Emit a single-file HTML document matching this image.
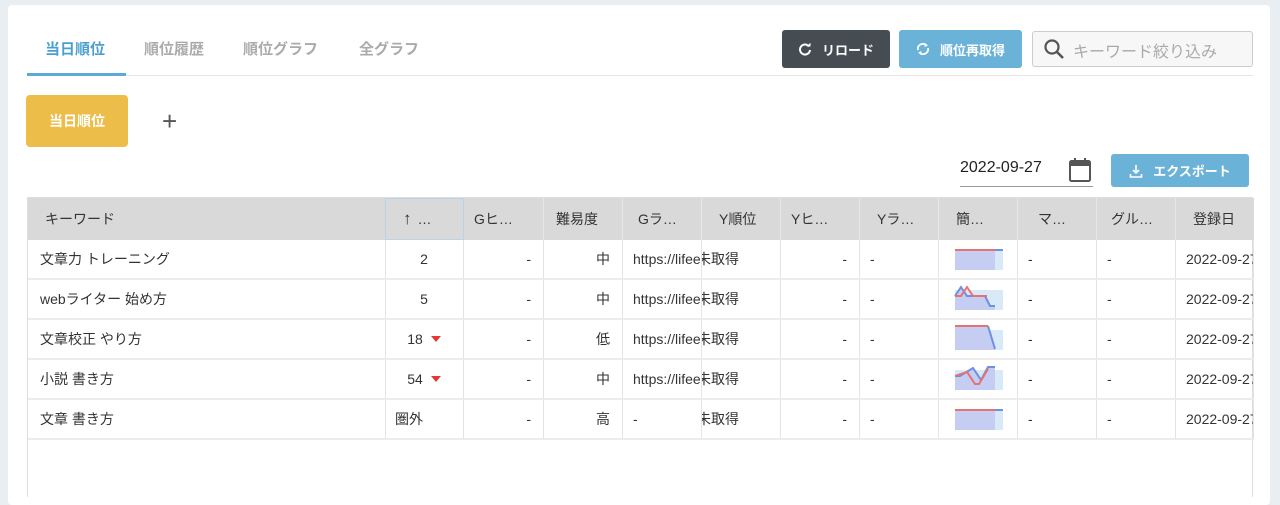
<!DOCTYPE html>
<html><head><meta charset="utf-8"><style>
*{box-sizing:border-box;margin:0;padding:0}
body{width:1280px;height:492px;background:#e9eef2;font-family:"Liberation Sans","Noto Sans CJK JP",sans-serif;position:relative;overflow:hidden;color:#333}
.card{position:absolute;left:8px;top:5px;width:1262px;height:500px;background:#fff;border-radius:4px}
.a{position:absolute}
.tab{position:absolute;top:38px;font-size:15px;font-weight:bold;color:#aaa}
.btn{position:absolute;border-radius:3px;color:#fff;font-size:13px;font-weight:bold;display:flex;align-items:center;justify-content:center;gap:10px}
.tbl{position:absolute;left:27px;top:197px;width:1226px;height:300px;border:1px solid #ddd;border-bottom:none}
.hd{position:absolute;top:0;height:42px;background:#d9d9d9;font-size:14px;display:flex;align-items:center;border-right:1px solid #e6e6e6}
.c{position:absolute;height:40px;font-size:14px;display:flex;align-items:center;border-right:1px solid #e4e4e4;border-bottom:2px solid #ececec;overflow:hidden;white-space:nowrap}
.r{justify-content:flex-end;padding-right:12px}
.ctr{justify-content:center}
.l{padding-left:10px}
.tri{display:inline-block;width:0;height:0;border-left:5px solid transparent;border-right:5px solid transparent;border-top:6px solid #e53935;margin-left:8px}
</style></head><body>
<div class="card"></div>
<div class="tab" style="left:45px;color:#4a9fd0">当日順位</div>
<div class="tab" style="left:144px">順位履歴</div>
<div class="tab" style="left:243px">順位グラフ</div>
<div class="tab" style="left:359px">全グラフ</div>
<div class="a" style="left:27px;top:75px;width:1226px;height:1px;background:#e5e5e5"></div>
<div class="a" style="left:27px;top:73px;width:99px;height:3px;background:#5aaad6"></div>
<div class="btn" style="left:782px;top:30px;width:108px;height:38px;background:#454d52">
<svg width="14" height="14" viewBox="0 0 14 14"><path d="M11 4.5A5 5 0 1 0 12 8" stroke="#fff" stroke-width="2" fill="none"/><path d="M8.5 4.5H12.5V0.8Z" fill="#fff"/></svg>リロード</div>
<div class="btn" style="left:899px;top:30px;width:123px;height:38px;background:#6ab2d8">
<svg width="14" height="14" viewBox="0 0 14 14"><path d="M2 8A5 5 0 0 1 10 3M12 6A5 5 0 0 1 4 11" stroke="#fff" stroke-width="1.8" fill="none"/><path d="M9 1L12 3.5 8.5 5Z M5 13L2 10.5 5.5 9Z" fill="#fff"/></svg>順位再取得</div>
<div class="a" style="left:1032px;top:31px;width:221px;height:36px;border:1px solid #ccc;border-radius:3px;background:#f7f7f7"></div>
<svg class="a" style="left:1043px;top:38px" width="22" height="22" viewBox="0 0 22 22"><circle cx="9" cy="9" r="6.5" stroke="#555" stroke-width="2.2" fill="none"/><path d="M14 14L20 20" stroke="#555" stroke-width="2.6"/></svg>
<div class="a" style="left:1073px;top:38px;font-size:16px;color:#aaa">キーワード絞り込み</div>
<div class="btn" style="left:26px;top:95px;width:102px;height:52px;background:#ecbd48;font-size:14px;border-radius:4px">当日順位</div>
<div class="a" style="left:162px;top:106px;font-size:26px;color:#555;font-weight:300">+</div>
<div class="a" style="left:960px;top:159px;font-size:16px;color:#222">2022-09-27</div>
<svg class="a" style="left:1068px;top:157px" width="24" height="26" viewBox="0 0 24 26"><rect x="2" y="4" width="20" height="20" rx="1.5" stroke="#555" stroke-width="2" fill="none"/><rect x="2" y="4" width="20" height="5" fill="#555"/><rect x="6" y="1" width="2" height="5" fill="#555"/><rect x="16" y="1" width="2" height="5" fill="#555"/></svg>
<div class="a" style="left:960px;top:186px;width:133px;height:1px;background:#999"></div>
<div class="btn" style="left:1111px;top:154px;width:138px;height:33px;background:#6ab2d8"><svg width="14" height="14" viewBox="0 0 14 14"><path d="M7 1V9M4 6L7 9 10 6M1.5 10V13H12.5V10" stroke="#fff" stroke-width="1.6" fill="none"/></svg>エクスポート</div>

<div class="tbl">
<div class="hd" style="left:0;width:358px;padding-left:17px">キーワード</div>
<div class="hd" style="left:357px;width:79px;padding-left:17px;border:1px solid #b8d4e8"><span style="font-size:17px;margin-right:6px">↑</span>…</div>
<div class="hd" style="left:436px;width:80px;padding-left:10px">Gヒ…</div>
<div class="hd" style="left:516px;width:79px;padding-left:12px">難易度</div>
<div class="hd" style="left:595px;width:79px;padding-left:15px">Gラ…</div>
<div class="hd" style="left:674px;width:79px;padding-left:17px">Y順位</div>
<div class="hd" style="left:753px;width:79px;padding-left:10px">Yヒ…</div>
<div class="hd" style="left:832px;width:79px;padding-left:17px">Yラ…</div>
<div class="hd" style="left:911px;width:79px;padding-left:17px">簡…</div>
<div class="hd" style="left:990px;width:79px;padding-left:20px">マ…</div>
<div class="hd" style="left:1069px;width:79px;padding-left:14px">グル…</div>
<div class="hd" style="left:1148px;width:78px;padding-left:17px;border-right:none">登録日</div>
</div>

<div id="rows"></div>
<script>
var rows=[["文章力 トレーニング","2","",'中',1,"M40 6H48","M0 6H40"],
["webライター 始め方","5","",'中',1,"M0 12L6 3 12 12H30L35 22H40","M0 12H6L12 3 18 12H32"],
["文章校正 やり方","18",1,'低',1,"M33 2L40 25","M0 2H33"],
["小説 書き方","54",1,'中',1,"M0 12H5L18 4 26 16 33 3H40","M0 12L6 10 12 8 20 20 24 20 33 5"],
["文章 書き方","圏外","",'高',0,"M40 6H48","M0 6H40"]];
var h="",L=28;
rows.forEach(function(r,i){var t=240+i*40;
function c(x,w,cls,txt){h+='<div class="c '+cls+'" style="left:'+x+'px;top:'+t+'px;width:'+w+'px">'+txt+'</div>';}
c(L,358,"",'<span style="padding-left:12px">'+r[0]+'</span>');
c(L+357,79,r[1]=="圏外"?"l":"ctr",r[1]+(r[2]?'<span class="tri"></span>':''));
c(L+436,80,"r","-");
c(L+516,79,"r",r[3]);
c(L+595,79,"l",r[4]?"https://lifeeee":"-");
c(L+674,79,"","<span style='margin-left:-5px'>未取得</span>");
c(L+753,79,"r","-");
c(L+832,79,"l","-");
c(L+911,79,"",'<svg style="margin-left:15px" width="50" height="30" viewBox="-1 0 50 30"><rect x="0" y="6" width="48" height="20" fill="#d8e9f7"/><path d="'+(i==2?"M0 2H33L40 25V26H0Z":i==1?"M0 12L6 3 12 12H30L35 22H40V26H0Z":i==3?"M0 12L18 4 26 16 33 3H40V26H0Z":"M0 6H40V26H0Z")+'" fill="#c5cdf2"/><path d="'+r[5]+'" stroke="#6f8fe0" stroke-width="2" fill="none"/><path d="'+r[6]+'" stroke="#e57373" stroke-width="2" fill="none"/></svg>');
c(L+990,79,"l","-");
c(L+1069,79,"l","-");
c(L+1148,78,"l","2022-09-27");
});
document.getElementById("rows").innerHTML=h;
</script>
</body></html>
